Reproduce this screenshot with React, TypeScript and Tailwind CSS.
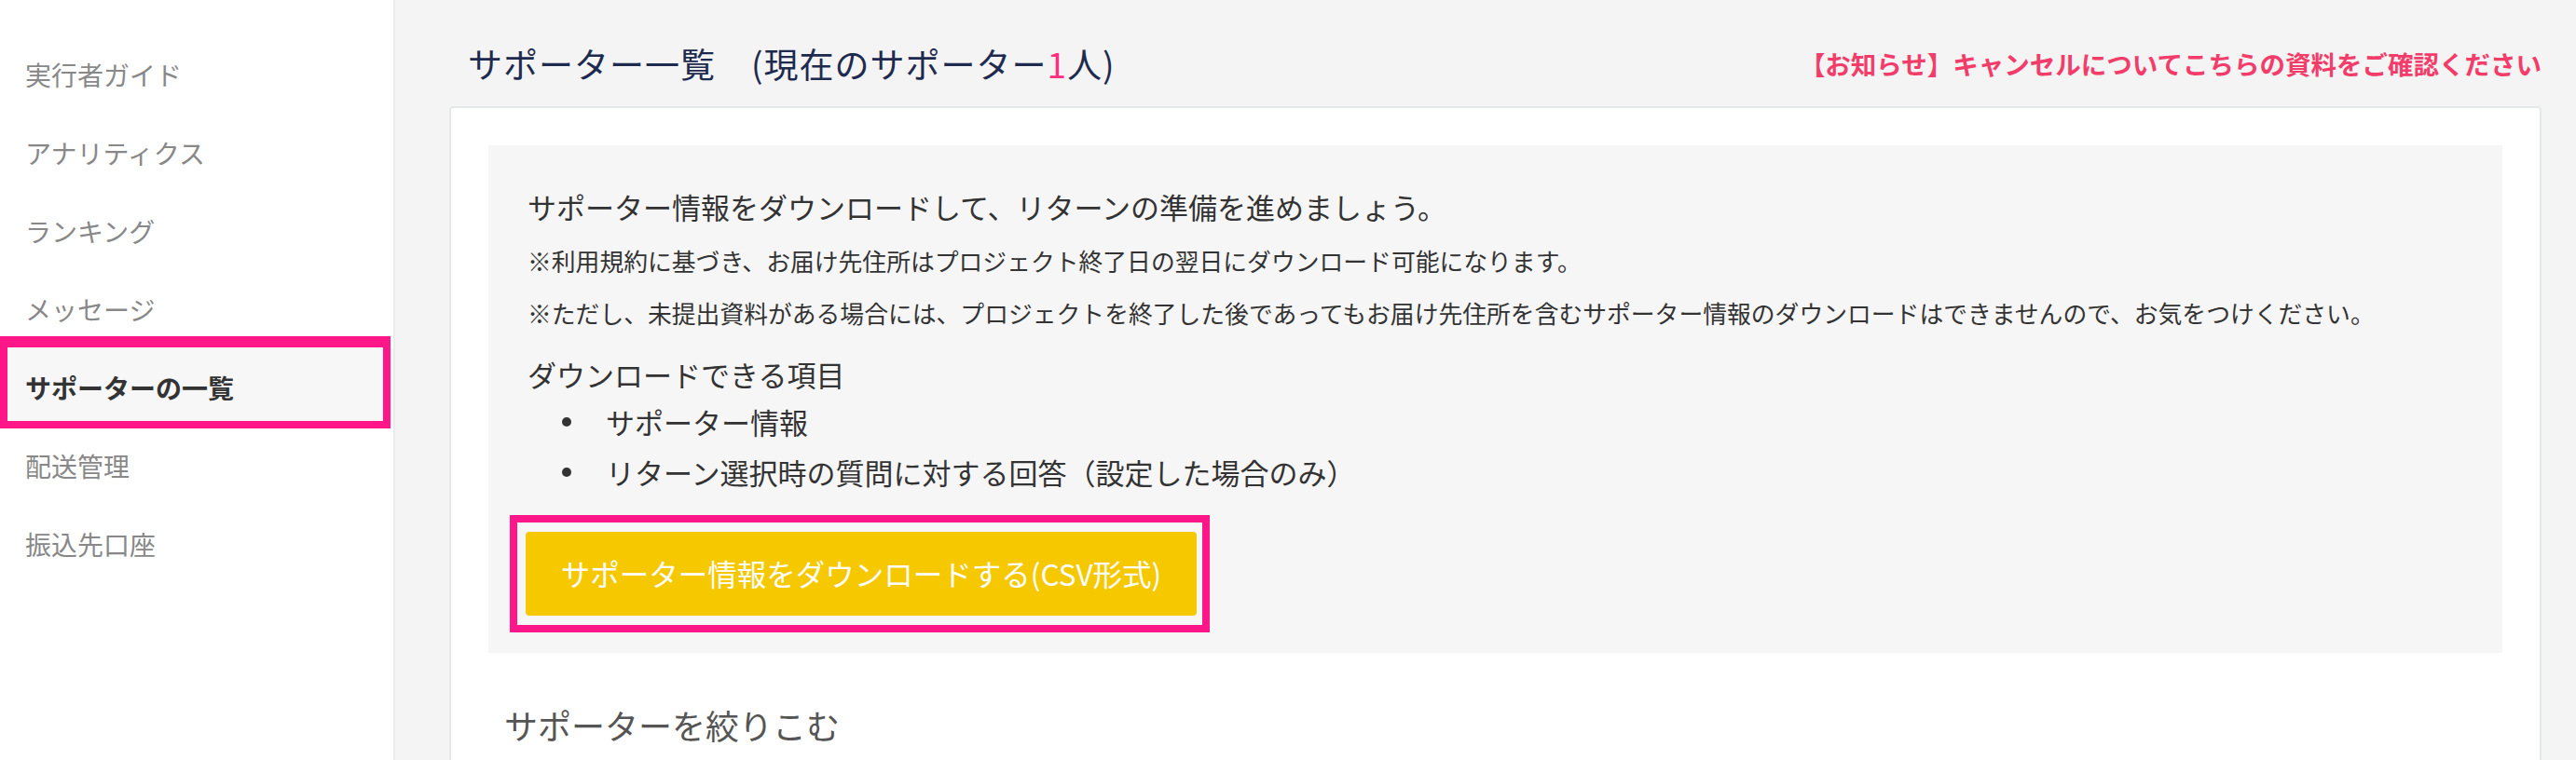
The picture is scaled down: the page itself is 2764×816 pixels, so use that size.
import React from 'react';

const navItems = [
  '実行者ガイド',
  'アナリティクス',
  'ランキング',
  'メッセージ',
  'サポーターの一覧',
  '配送管理',
  '振込先口座',
];

const App: React.FC = () => {
  return (
    <div className="flex h-[816px] w-full overflow-hidden bg-[#f4f4f4] font-['Noto_Sans_CJK_JP',sans-serif]">
      {/* Sidebar */}
      <aside className="w-[424px] shrink-0 border-r-2 border-[#ececec] bg-white pt-[38px]">
        {navItems.map((item) => {
          const active = item === 'サポーターの一覧';
          return (
            <div
              key={item}
              className={`relative flex h-[84px] items-center pl-[27px] text-[28px] ${
                active ? 'bg-[#f7f7f7] font-bold text-[#333]' : 'text-[#888]'
              }`}
            >
              {item}
              {active && (
                <div className="pointer-events-none absolute bottom-[-2px] left-0 right-[3px] top-[-13px] border-[8px] border-t-[12px] border-[#ff1689]" />
              )}
            </div>
          );
        })}
      </aside>

      {/* Main */}
      <main className="flex min-w-0 flex-1 flex-col pl-[58px] pr-[37px] pt-[46px]">
        <div className="flex items-center justify-between">
          <h1 className="pl-[20px] text-[37px] leading-[44px] tracking-[1px] text-[#1e2b4f]">
            サポーター一覧　(現在のサポーター<span className="text-[#ff2f7f]">1</span>人)
          </h1>
          <a className="text-[27.5px] font-bold leading-[44px] text-[#f23d6b]">
            【お知らせ】キャンセルについてこちらの資料をご確認ください
          </a>
        </div>

        <section className="mt-[24px] flex-1 rounded-[4px] border-2 border-[#e4e8e8] bg-white p-[40px]">
          <div className="bg-[#f6f6f6] px-[42px] pb-[40px] pt-[44px] text-[#333]">
            <p className="text-[31px] leading-[44px]">
              サポーター情報をダウンロードして、リターンの準備を進めましょう。
            </p>
            <p className="mt-[16px] text-[25.8px] leading-[40px]">
              ※利用規約に基づき、お届け先住所はプロジェクト終了日の翌日にダウンロード可能になります。
            </p>
            <p className="mt-[16px] text-[25.8px] leading-[40px]">
              ※ただし、未提出資料がある場合には、プロジェクトを終了した後であってもお届け先住所を含むサポーター情報のダウンロードはできませんので、お気をつけください。
            </p>
            <p className="mt-[24px] text-[31px] leading-[44px]">ダウンロードできる項目</p>
            <ul className="mt-[2px]">
              <li className="flex h-[54px] items-center text-[31px]">
                <span className="ml-[37px] mr-[37px] h-[10px] w-[10px] rounded-full bg-[#333]" />
                サポーター情報
              </li>
              <li className="flex h-[54px] items-center text-[31px]">
                <span className="ml-[37px] mr-[37px] h-[10px] w-[10px] rounded-full bg-[#333]" />
                リターン選択時の質問に対する回答（設定した場合のみ）
              </li>
            </ul>

            <div className="relative ml-[-2px] mt-[37px] w-[720px]">
              <button className="h-[90px] w-full rounded-[4px] bg-[#f5c800] text-[31.5px] text-white">
                サポーター情報をダウンロードする(CSV形式)
              </button>
              <div className="pointer-events-none absolute -bottom-[18px] -left-[17px] -right-[14px] -top-[18px] border-[8px] border-[#ff1689]" />
            </div>
          </div>

          <h2 className="ml-[17px] mt-[53px] text-[36px] leading-[48px] text-[#555]">
            サポーターを絞りこむ
          </h2>
        </section>
      </main>
    </div>
  );
};

export default App;
